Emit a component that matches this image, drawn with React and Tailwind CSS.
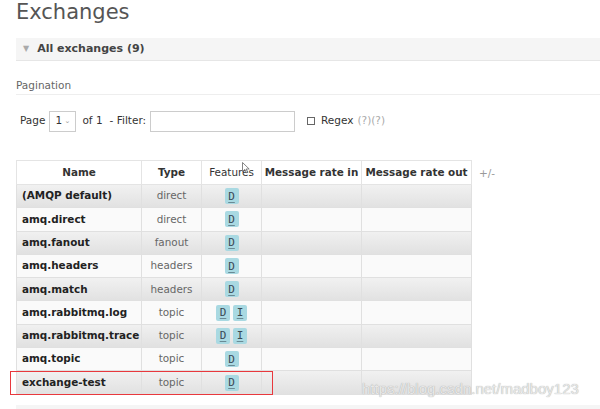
import React from "react";

const rows = [
  ["(AMQP default)", "direct", ["D"]],
  ["amq.direct", "direct", ["D"]],
  ["amq.fanout", "fanout", ["D"]],
  ["amq.headers", "headers", ["D"]],
  ["amq.match", "headers", ["D"]],
  ["amq.rabbitmq.log", "topic", ["D", "I"]],
  ["amq.rabbitmq.trace", "topic", ["D", "I"]],
  ["amq.topic", "topic", ["D"]],
  ["exchange-test", "topic", ["D"]],
];

function Badge({ t }) {
  return (
    <span
      className="inline-flex h-[16px] w-[14px] items-center justify-center rounded-[2px] bg-[#a9d9e2] text-[11px] leading-none text-[#3a4a55] underline decoration-[#6a8a95] underline-offset-2"
      style={{ fontFamily: '"DejaVu Sans Mono", monospace' }}
    >
      {t}
    </span>
  );
}

export default function App() {
  return (
    <div
      className="relative h-[409px] w-[600px] overflow-hidden bg-white pl-4 text-[#333]"
      style={{ fontFamily: '"DejaVu Sans", Verdana, sans-serif' }}
    >
      <div className="h-[38px] text-[21px] leading-[24px] text-[#555]">Exchanges</div>

      <div className="flex h-[23px] items-center border-b border-[#e6e6e6] bg-[#f5f5f5] pl-[7px]">
        <span className="mr-[8px] text-[8px] text-[#aaa]">▼</span>
        <span className="text-[11px] font-bold text-[#444]">All exchanges (9)</span>
      </div>

      <div className="mt-[17px] flex h-[17px] items-center border-b border-[#eee] text-[10.5px] text-[#666]">
        Pagination
      </div>

      <div className="mt-[15px] flex h-[22px] items-center pl-[4px] text-[10.5px] text-[#333]">
        <span>Page</span>
        <span className="ml-[4px] flex h-[21px] w-[27px] items-center justify-between border border-[#ccc] bg-white px-[5px]">
          <span>1</span>
          <span className="text-[7px] text-[#999]">⌄</span>
        </span>
        <span className="ml-[6px]">of 1</span>
        <span className="ml-[7px]">- Filter:</span>
        <span className="ml-[4px] h-[21px] w-[145px] border border-[#ccc] bg-white" />
        <span className="ml-[12px] h-[8px] w-[8px] border border-[#666]" />
        <span className="ml-[6px]">Regex</span>
        <span className="ml-[4px] text-[#aaa]">(?)(?)</span>
      </div>

      <div className="mt-[28px] flex items-start">
        <table className="w-[455px] table-fixed border-collapse whitespace-nowrap text-[10.4px]">
          <colgroup>
            <col className="w-[125px]" />
            <col className="w-[60px]" />
            <col className="w-[60px]" />
            <col className="w-[100px]" />
            <col className="w-[110px]" />
          </colgroup>
          <thead>
            <tr className="h-[24px] bg-white">
              <th className="border border-[#e4e4e4] font-bold">Name</th>
              <th className="border border-[#e4e4e4] font-bold">Type</th>
              <th className="border border-[#e4e4e4] font-normal">Features</th>
              <th className="border border-[#e4e4e4] font-bold">Message rate in</th>
              <th className="border border-[#e4e4e4] font-bold">Message rate out</th>
            </tr>
          </thead>
          <tbody>
            {rows.map(([name, type, feats], i) => (
              <tr
                key={name}
                className={
                  i % 2 === 0
                    ? "h-[23.3px] bg-gradient-to-b from-[#f1f1f1] to-[#e1e1e1]"
                    : "h-[23.3px] bg-[#fafafa]"
                }
              >
                <td className="border border-[#e0e0e0] pl-[5px] font-bold text-[#222]">{name}</td>
                <td className="border border-[#e0e0e0] text-center text-[#666]">{type}</td>
                <td className="border border-[#e0e0e0] text-center">
                  <span className="inline-flex gap-[3px] align-middle">
                    {feats.map((f) => (
                      <Badge key={f} t={f} />
                    ))}
                  </span>
                </td>
                <td className="border border-[#e0e0e0]" />
                <td className="border border-[#e0e0e0]" />
              </tr>
            ))}
          </tbody>
        </table>
        <span className="ml-[7px] mt-[6px] text-[10.5px] text-[#999]">+/-</span>
      </div>

      <div className="mt-[10px] h-[6px] w-full bg-[#f5f5f5]" />

      <div className="pointer-events-none absolute left-[10px] top-[371px] h-[24px] w-[263px] border-[1.5px] border-[#e8383d]" />

      <svg className="absolute left-[242px] top-[162px]" width="8" height="12" viewBox="0 0 8 12">
        <path d="M0.5 0.5 L0.5 9.5 L2.8 7.4 L4.3 10.8 L5.6 10.2 L4.2 7 L7.2 7 Z" fill="white" stroke="#666" strokeWidth="0.8" />
      </svg>

      <div
        className="absolute left-[362px] top-[378px] text-[15px] text-[#e8e8e8]"
        style={{ fontFamily: '"Liberation Sans", Arial, sans-serif', textShadow: "0 0 1px #999" }}
      >
        https://blog.csdn.net/madboy123
      </div>
    </div>
  );
}
